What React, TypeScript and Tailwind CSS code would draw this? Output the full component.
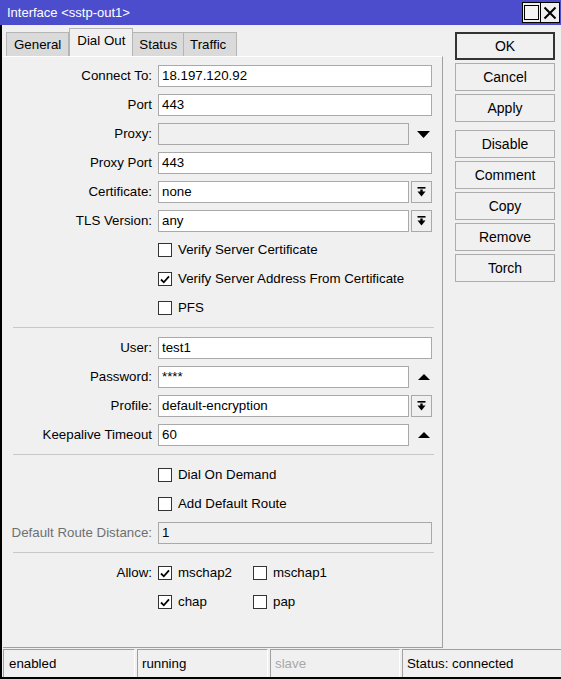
import React from 'react';

const font = { fontFamily: '"Liberation Sans", Arial, sans-serif' };

function DropIcon() {
  // bar over a down arrow, as in the combo button
  return (
    <svg width="9" height="10" viewBox="0 0 9 10">
      <rect x="0.5" y="0" width="8" height="1.6" fill="#000" />
      <rect x="3.3" y="2.5" width="2.4" height="2.5" fill="#000" />
      <polygon points="0.5,4.6 8.5,4.6 4.5,9.6" fill="#000" />
    </svg>
  );
}

function Check({ on }: { on?: boolean }) {
  return (
    <span className="w-[14px] h-[14px] border border-[#333] bg-white flex items-center justify-center shrink-0">
      {on && (
        <svg width="10" height="9" viewBox="0 0 10 9">
          <path d="M1 4.5 L3.8 7.3 L9 1.4" stroke="#000" strokeWidth="1.8" fill="none" />
        </svg>
      )}
    </span>
  );
}

function Label({ text, gray }: { text: string; gray?: boolean }) {
  return (
    <div className={`w-[150px] pr-[1px] text-right shrink-0 whitespace-nowrap ${gray ? 'text-[#6f6f6f]' : 'text-black'}`}>
      {text}
    </div>
  );
}

function Field({
  label,
  value,
  kind,
  disabled,
  grayLabel,
}: {
  label: string;
  value: string;
  kind?: 'combo' | 'down' | 'up';
  disabled?: boolean;
  grayLabel?: boolean;
}) {
  return (
    <div className="flex items-center h-[22px] mt-[7px] gap-[5px]">
      <Label text={label} gray={grayLabel} />
      <div className="w-[274px] flex items-center gap-[2px] h-full">
        <div
          className={`flex-1 h-full border border-[#a9a9a9] flex items-center px-[3px] ${
            disabled ? 'bg-[#f0f0f0]' : 'bg-white'
          }`}
        >
          {value}
        </div>
        {kind === 'combo' && (
          <div className="w-[21px] h-full border border-[#a9a9a9] bg-[#f0f0f0] flex items-center justify-center">
            <DropIcon />
          </div>
        )}
        {kind === 'down' && (
          <div className="w-[21px] h-full flex items-center justify-center pl-[4px]">
            <svg width="13" height="7" viewBox="0 0 13 7">
              <polygon points="0,0 13,0 6.5,7" fill="#000" />
            </svg>
          </div>
        )}
        {kind === 'up' && (
          <div className="w-[21px] h-full flex items-center justify-center pl-[4px]">
            <svg width="12" height="6" viewBox="0 0 12 6">
              <polygon points="0,6 12,6 6,0" fill="#000" />
            </svg>
          </div>
        )}
      </div>
    </div>
  );
}

function CheckRow({ text, on }: { text: string; on?: boolean }) {
  return (
    <div className="flex items-center h-[22px] mt-[7px] pl-[155px] gap-[6px]">
      <Check on={on} />
      <span>{text}</span>
    </div>
  );
}

function Sep() {
  return <div className="ml-[10px] mr-[8px] h-px shrink-0 bg-[#c8c8c8] mt-[8px] mb-[2px]" />;
}

const buttons = ['OK', 'Cancel', 'Apply', 'Disable', 'Comment', 'Copy', 'Remove', 'Torch'];

export default function App() {
  return (
    <div className="w-[561px] h-[679px] bg-[#f0f0f0] text-[13.3px] text-black flex flex-col overflow-hidden" style={font}>
      {/* title bar */}
      <div className="h-[25px] bg-[#4b4dcd] flex items-center justify-between pl-[7px] pr-[1px] shrink-0">
        <span className="text-white text-[13px]">Interface &lt;sstp-out1&gt;</span>
        <div className="flex border border-black">
          <div className="w-[18px] h-[19px] bg-[#f0f0f0] flex items-center justify-center border-r border-black">
            <div className="w-[15px] h-[15px] border-[1.5px] border-black bg-[#f4f4f4]" />
          </div>
          <div className="w-[18px] h-[19px] bg-[#f0f0f0] flex items-center justify-center">
            <svg width="14" height="14" viewBox="0 0 14 14">
              <path d="M1.5 1.5 L12.5 12.5 M12.5 1.5 L1.5 12.5" stroke="#000" strokeWidth="2" />
            </svg>
          </div>
        </div>
      </div>

      <div className="flex-1 flex flex-col border-l-2 border-b-2 border-black">
        <div className="flex flex-1">
          {/* tabs + panel */}
          <div className="w-[440px] ml-[1px] flex flex-col">
            <div className="flex items-end h-[31px] pl-[3px] pt-[3px]">
              <div className="h-[25px] px-[7px] flex items-center bg-[#dadada] border border-[#b5b5b5] border-b-0 mb-[-1px]">General</div>
              <div className="h-[28px] px-[7px] flex items-center bg-[#f0f0f0] border border-[#b5b5b5] border-b-0 relative z-10 pb-[4px]">Dial Out</div>
              <div className="h-[25px] px-[6px] flex items-center bg-[#dadada] border border-[#b5b5b5] border-b-0 border-l-0 mb-[-1px]">Status</div>
              <div className="h-[25px] px-[6px] flex items-center bg-[#dadada] border border-[#b5b5b5] border-b-0 border-l-0 mb-[-1px] pr-[10px]">Traffic</div>
            </div>
            <div className="flex-1 flex flex-col border-t border-white border-r border-r-[#a0a0a0] border-b border-b-[#a0a0a0] pt-[1px] mb-[1px]">
              <Field label="Connect To:" value="18.197.120.92" />
              <Field label="Port" value="443" />
              <Field label="Proxy:" value="" kind="down" disabled />
              <Field label="Proxy Port" value="443" />
              <Field label="Certificate:" value="none" kind="combo" />
              <Field label="TLS Version:" value="any" kind="combo" />
              <CheckRow text="Verify Server Certificate" />
              <CheckRow text="Verify Server Address From Certificate" on />
              <CheckRow text="PFS" />
              <Sep />
              <Field label="User:" value="test1" />
              <Field label="Password:" value="****" kind="up" />
              <Field label="Profile:" value="default-encryption" kind="combo" />
              <Field label="Keepalive Timeout" value="60" kind="up" />
              <Sep />
              <CheckRow text="Dial On Demand" />
              <CheckRow text="Add Default Route" />
              <Field label="Default Route Distance:" value="1" disabled grayLabel />
              <Sep />
              <div className="flex items-center h-[22px] mt-[7px] gap-[5px]">
                <Label text="Allow:" />
                <div className="flex items-center">
                  <div className="w-[95px] flex items-center gap-[6px]">
                    <Check on />
                    <span>mschap2</span>
                  </div>
                  <div className="flex items-center gap-[6px]">
                    <Check />
                    <span>mschap1</span>
                  </div>
                </div>
              </div>
              <div className="flex items-center h-[22px] mt-[7px] pl-[155px]">
                <div className="w-[95px] flex items-center gap-[6px]">
                  <Check on />
                  <span>chap</span>
                </div>
                <div className="flex items-center gap-[6px]">
                  <Check />
                  <span>pap</span>
                </div>
              </div>
            </div>
          </div>

          {/* right buttons */}
          <div className="ml-[12px] pt-[7px] flex flex-col w-[100px]">
            {buttons.map((b, i) => (
              <div
                key={b}
                className={`h-[28px] flex items-center justify-center text-[14px] ${
                  b === 'OK' ? 'border-2 border-[#333]' : 'border border-[#adadad]'
                } bg-[#f0f0f0] ${i === 0 ? '' : i === 3 ? 'mt-[8px]' : 'mt-[3px]'}`}
              >
                {b}
              </div>
            ))}
          </div>
        </div>

        {/* status bar */}
        <div className="h-[28px] flex gap-[2px] pl-[1px] shrink-0">
          <div className="w-[132px] border-t border-l border-[#a0a0a0] border-r border-r-white flex items-center pl-[5px]">enabled</div>
          <div className="w-[131px] border-t border-l border-[#a0a0a0] border-r border-r-white flex items-center pl-[4px]">running</div>
          <div className="w-[130px] border-t border-l border-[#a0a0a0] border-r border-r-white flex items-center pl-[4px] text-[#a8a8a8]">slave</div>
          <div className="flex-1 border-t border-l border-[#a0a0a0] flex items-center pl-[4px]">Status: connected</div>
        </div>
      </div>
    </div>
  );
}
